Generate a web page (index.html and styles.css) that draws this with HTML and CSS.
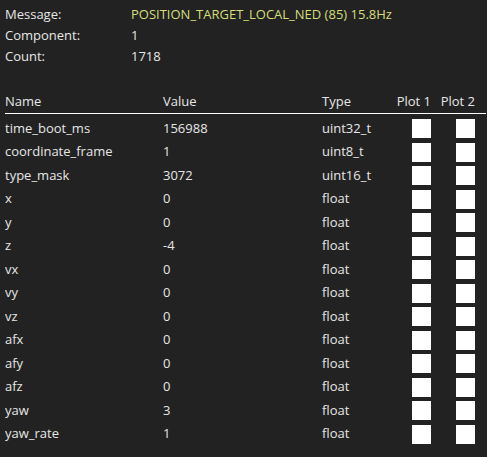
FILE: index.html
```html
<!DOCTYPE html>
<html lang="en">
<head>
    <meta charset="UTF-8">
    <meta name="viewport" content="width=device-width, initial-scale=1.0">
    <title>MAVLink Inspector - Message</title>
    <link rel="stylesheet" href="styles.css">
</head>
<body>
    <div class="inspector">
        <div class="msg-info">
            <span class="info-label">Message:</span>
            <span class="info-value highlight">POSITION_TARGET_LOCAL_NED (85) 15.8Hz</span>
            <span class="info-label">Component:</span>
            <span class="info-value">1</span>
            <span class="info-label">Count:</span>
            <span class="info-value">1718</span>
        </div>

        <div class="fields">
            <div class="field-row field-head">
                <span>Name</span>
                <span>Value</span>
                <span>Type</span>
                <span class="plot-col">Plot 1</span>
                <span class="plot-col">Plot 2</span>
            </div>
            <div class="field-list" id="fieldList"></div>
        </div>
    </div>

    <script>
        // Fields of the selected message
        const fields = [
            ['time_boot_ms', '156988', 'uint32_t'],
            ['coordinate_frame', '1', 'uint8_t'],
            ['type_mask', '3072', 'uint16_t'],
            ['x', '0', 'float'],
            ['y', '0', 'float'],
            ['z', '-4', 'float'],
            ['vx', '0', 'float'],
            ['vy', '0', 'float'],
            ['vz', '0', 'float'],
            ['afx', '0', 'float'],
            ['afy', '0', 'float'],
            ['afz', '0', 'float'],
            ['yaw', '3', 'float'],
            ['yaw_rate', '1', 'float']
        ];

        const list = document.getElementById('fieldList');
        fields.forEach(([name, value, type]) => {
            const row = document.createElement('div');
            row.className = 'field-row';
            row.innerHTML = `
                <span>${name}</span>
                <span>${value}</span>
                <span>${type}</span>
                <span class="plot-col"><span class="plot-check"></span></span>
                <span class="plot-col"><span class="plot-check"></span></span>`;
            list.appendChild(row);
        });
    </script>
</body>
</html>
```

FILE: styles.css
```css
* {
    margin: 0;
    padding: 0;
    box-sizing: border-box;
}

body {
    font-family: 'Open Sans', 'Noto Sans', sans-serif;
    font-size: 13px;
    background: #222222;
    color: #e6e6e6;
    width: 487px;
    height: 457px;
    overflow: hidden;
}

.inspector {
    padding: 4px 1px 0 5px;
}

.msg-info {
    display: grid;
    grid-template-columns: 126px auto;
    grid-auto-rows: 21px;
    line-height: 21px;
}

.highlight {
    color: #d5de7a;
}

.fields {
    margin-top: 22px;
}

.field-row {
    display: grid;
    grid-template-columns: 158px 159px 66px 43px 44px;
    height: 23.5px;
    line-height: 23.5px;
    align-items: center;
}

.field-head {
    height: 25px;
    line-height: 24px;
    border-bottom: 1px solid #ffffff;
    align-items: start;
}

.field-list {
    padding-top: 2.75px;
}

.plot-col {
    display: flex;
    justify-content: flex-end;
}

.plot-check {
    width: 19px;
    height: 19px;
    background: #ffffff;
}
```
